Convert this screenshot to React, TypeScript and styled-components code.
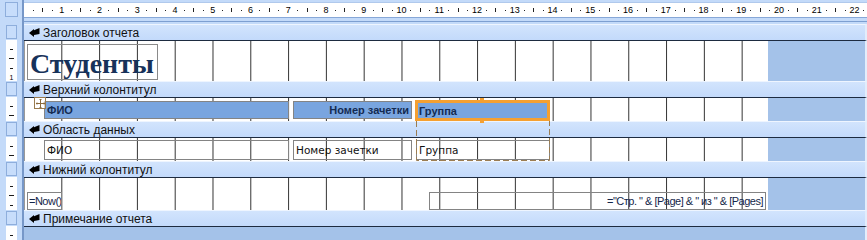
import React from 'react';
import styled, { createGlobalStyle } from 'styled-components';

const STEP = 9.45; // quarter of a centimetre on screen

const GlobalStyle = createGlobalStyle`
  html, body {
    margin: 0;
    padding: 0;
    background: #c3daf9;
  }
  body {
    font-family: "Liberation Sans", Arial, sans-serif;
  }
`;

const Designer = styled.div`
  position: relative;
  width: 867px;
  height: 240px;
  overflow: hidden;
  background: #c3daf9;
  display: flex;
  flex-direction: column;
`;

const Row = styled.div<{ $h: number }>`
  display: flex;
  height: ${(p) => p.$h}px;
  flex-shrink: 0;
`;

const Gutter = styled.div`
  width: 24px;
  flex-shrink: 0;
  box-sizing: border-box;
  padding-left: 6px;
  padding-right: 5px;
  border-right: 2px solid #7697c8;
  display: flex;
  flex-direction: column;
`;

const CornerBox = styled.div`
  margin: 2px 0 0 -1px;
  width: 13px;
  height: 15px;
  box-sizing: border-box;
  background: #c7ddfb;
  border: 1px solid #8eaedc;
`;

const SelectorBox = styled.div`
  margin-top: 1px;
  height: 14px;
  box-sizing: border-box;
  background: #c7ddfb;
  border: 1px solid #8eaedc;
`;

const SideRuler = styled.div`
  flex: 1;
  background: #fdfeff;
  display: flex;
  flex-direction: column;
  align-items: center;
  padding-top: ${STEP / 2}px;
  overflow: hidden;
`;

const SideMark = styled.div`
  height: ${STEP}px;
  flex-shrink: 0;
  display: flex;
  align-items: center;
  justify-content: center;
  font-size: 7px;
  line-height: 7px;
  color: #000;
`;

const SideTick = styled.span<{ $long?: boolean }>`
  display: block;
  width: ${(p) => (p.$long ? 5 : 3)}px;
  height: 1px;
  background: #1a1a1a;
`;

const RulerArea = styled.div`
  flex: 1;
  display: flex;
  flex-direction: column;
  padding-top: 2px;
`;

const TopRuler = styled.div`
  height: 16px;
  margin-right: 3px;
  box-sizing: border-box;
  background: #fff;
  border-top: 1px solid #b0c9ec;
  border-bottom: 1px solid #87a8d8;
  display: flex;
  align-items: center;
  padding-left: ${STEP / 2}px;
  overflow: hidden;
`;

const RulerMark = styled.div`
  width: ${STEP}px;
  flex-shrink: 0;
  display: flex;
  justify-content: center;
  align-items: center;
  font-size: 9px;
  line-height: 9px;
  color: #000;
`;

const Dot = styled.span`
  display: block;
  width: 1px;
  height: 1px;
  background: #222;
`;

const Tick = styled.span`
  display: block;
  width: 1px;
  height: 4px;
  background: #222;
`;

const RulerFoot = styled.div`
  margin-top: 3px;
  border-top: 1px solid #7d9fd1;
`;

const Bar = styled.div`
  flex: 1;
  display: flex;
  align-items: center;
  gap: 3px;
  padding-left: 5px;
  box-sizing: border-box;
  background: linear-gradient(#d2e4fd, #c3dafb);
  border-top: 1px solid #eef5ff;
  border-right: 2px solid #e3edfb;
  font-size: 12px;
  color: #111;
  white-space: nowrap;
`;

const Body = styled.div`
  flex: 1;
  display: flex;
  box-sizing: border-box;
  border-top: 1px solid #1d2b40;
  border-right: 2px solid #e3edfb;
  background: #a4c2e9;
`;

const Canvas = styled.div`
  position: relative;
  width: 744px;
  flex-shrink: 0;
  background-color: #fff;
  background-image: linear-gradient(
    to right,
    transparent calc(100% - 1px),
    #333 calc(100% - 1px)
  );
  background-size: 37.8px 100%;
  background-position: 0.5px 0;
`;

const TitleLabel = styled.div`
  position: absolute;
  left: 3px;
  top: 3px;
  width: 131px;
  height: 36px;
  box-sizing: border-box;
  border: 1px solid #8a8a8a;
  padding: 0 0 0 2px;
  font-family: "Liberation Serif", "Times New Roman", serif;
  font-weight: bold;
  font-size: 28px;
  line-height: 38px;
  color: #17325a;
  white-space: nowrap;
`;

const Control = styled.div<{
  $x: number;
  $y: number;
  $w: number;
  $h: number;
  $label?: boolean;
  $right?: boolean;
  $picked?: boolean;
}>`
  position: absolute;
  left: ${(p) => p.$x}px;
  top: ${(p) => p.$y}px;
  width: ${(p) => p.$w}px;
  height: ${(p) => p.$h}px;
  box-sizing: border-box;
  border: ${(p) => (p.$picked ? '3px solid #f5a031' : '1px solid #848484')};
  background: ${(p) => (p.$label ? '#79a5df' : 'transparent')};
  color: ${(p) => (p.$label ? '#142b52' : '#111')};
  font-family: ${(p) => (p.$label ? '"Liberation Sans", Arial' : '"DejaVu Sans", Verdana')}, sans-serif;
  font-weight: ${(p) => (p.$label ? 'bold' : 'normal')};
  font-size: ${(p) => (p.$label ? 11 : 10.5)}px;
  display: flex;
  align-items: center;
  justify-content: ${(p) => (p.$right ? 'flex-end' : 'flex-start')};
  padding: 0 ${(p) => (p.$picked ? 1 : 2)}px;
  white-space: nowrap;
  overflow: ${(p) => (p.$picked ? 'visible' : 'hidden')};
`;

const FooterBox = styled(Control)`
  font-family: "Liberation Sans", Arial, sans-serif;
  font-size: 11px;
  letter-spacing: -0.5px;
  padding: 0 2px 0 1px;
  color: #14264a;
`;

const Handle = styled.span<{ $bottom?: boolean }>`
  position: absolute;
  left: 62px;
  ${(p) => (p.$bottom ? 'bottom: -5px;' : 'top: -5px;')}
  width: 4px;
  height: 4px;
  background: #f5a031;
`;

const MoveGrip = styled.div`
  position: absolute;
  left: 10px;
  top: -1px;
  width: 12px;
  height: 12px;
  box-sizing: border-box;
  border: 1px solid #9a7b4e;
  background: rgba(255, 255, 255, 0.6);
  display: flex;
  align-items: center;
  justify-content: center;
  z-index: 2;
`;

const ColumnOutline = styled.svg`
  position: absolute;
  left: 416px;
  top: 121px;
  z-index: 3;
  pointer-events: none;
`;

const SectionIcon = () => (
  <svg width="11" height="9" viewBox="0 0 11 9">
    <path d="M0 5 L5 1 L5 2.2 L10.5 0 L10.5 6 L5 7 L5 9 Z" fill="#000" />
  </svg>
);

const GripIcon = () => (
  <svg width="9" height="9" viewBox="0 0 9 9">
    <path d="M4.5 0 L4.5 9 M0 4.5 L9 4.5 M3.5 1 L4.5 0 L5.5 1 M3.5 8 L4.5 9 L5.5 8 M1 3.5 L0 4.5 L1 5.5 M8 3.5 L9 4.5 L8 5.5" stroke="#8a6a3c" strokeWidth="1" fill="none" />
  </svg>
);

const sideMarks = (count: number) =>
  Array.from({ length: count }, (_, i) => {
    const k = i + 1;
    if (k % 4 === 0) return <SideMark key={i}>{k / 4}</SideMark>;
    return (
      <SideMark key={i}>
        <SideTick $long={k % 2 === 0} />
      </SideMark>
    );
  });

const topMarks = Array.from({ length: 90 }, (_, i) => {
  const k = i + 1;
  if (k % 4 === 0) return <RulerMark key={i}>{k / 4}</RulerMark>;
  return <RulerMark key={i}>{k % 2 === 0 ? <Tick /> : <Dot />}</RulerMark>;
});

const SectionBar = ({ title }: { title: string }) => (
  <Row $h={16}>
    <Gutter>
      <SelectorBox />
    </Gutter>
    <Bar>
      <SectionIcon />
      {title}
    </Bar>
  </Row>
);

const Section = ({
  h,
  children,
  empty,
}: {
  h: number;
  children?: React.ReactNode;
  empty?: boolean;
}) => (
  <Row $h={h}>
    <Gutter>
      <SideRuler>{sideMarks(Math.floor(h / STEP))}</SideRuler>
    </Gutter>
    <Body>{!empty && <Canvas>{children}</Canvas>}</Body>
  </Row>
);

const App = () => {
  return (
    <>
      <GlobalStyle />
      <Designer>
        <Row $h={24}>
          <Gutter>
            <CornerBox />
          </Gutter>
          <RulerArea>
            <TopRuler>{topMarks}</TopRuler>
            <RulerFoot />
          </RulerArea>
        </Row>

        <SectionBar title="Заголовок отчета" />
        <Section h={41}>
          <TitleLabel>Студенты</TitleLabel>
        </Section>

        <SectionBar title="Верхний колонтитул" />
        <Section h={24}>
          <MoveGrip>
            <GripIcon />
          </MoveGrip>
          <Control $x={20} $y={3} $w={245} $h={18} $label>
            ФИО
          </Control>
          <Control $x={269} $y={3} $w={119} $h={18} $label $right>
            Номер зачетки
          </Control>
          <Control $x={391} $y={2} $w={135} $h={21} $label $picked>
            Группа
            <Handle />
            <Handle $bottom />
          </Control>
        </Section>

        <SectionBar title="Область данных" />
        <Section h={24}>
          <Control $x={20} $y={2} $w={245} $h={20}>
            ФИО
          </Control>
          <Control $x={269} $y={2} $w={119} $h={20}>
            Номер зачетки
          </Control>
          <Control $x={392} $y={2} $w={134} $h={20}>
            Группа
          </Control>
        </Section>

        <SectionBar title="Нижний колонтитул" />
        <Section h={33}>
          <FooterBox $x={3} $y={14} $w={35} $h={18}>
            =Now()
          </FooterBox>
          <FooterBox $x={405} $y={14} $w={337} $h={18} $right>
            ="Стр. " &amp; [Page] &amp; " из " &amp; [Pages]
          </FooterBox>
        </Section>

        <SectionBar title="Примечание отчета" />
        <Section h={14} empty />

        <ColumnOutline width="135" height="41" viewBox="0 0 135 41">
          <path
            d="M0.5 0 L0.5 39.5 L133.5 39.5 L133.5 0"
            stroke="#9b7d52"
            strokeWidth="1"
            strokeDasharray="6 3"
            fill="none"
          />
        </ColumnOutline>
      </Designer>
    </>
  );
};

export default App;
